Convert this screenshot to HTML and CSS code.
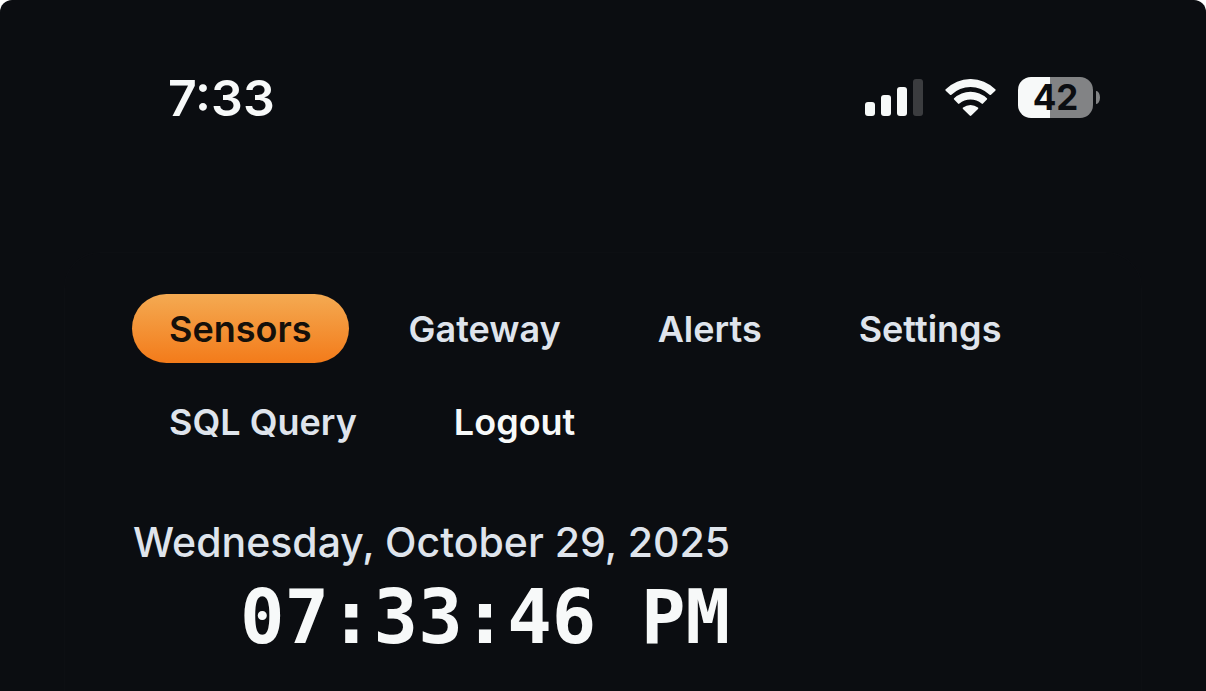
FILE: index.html
```html
<!DOCTYPE html>
<html lang="en">
<head>
<meta charset="utf-8">
<meta name="viewport" content="width=device-width, initial-scale=1">
<title>Sensors</title>
<link rel="stylesheet" href="styles.css">
</head>
<body>
<div class="screen">
  <header class="status">
    <time class="status-time">7:33</time>
    <div class="status-icons">
      <svg class="signal" width="58" height="37" viewBox="0 0 58 37" role="img" aria-label="Signal">
        <rect x="0" y="23" width="10" height="14" rx="3"/>
        <rect x="16" y="16" width="10" height="21" rx="3"/>
        <rect x="32" y="8" width="10" height="29" rx="3"/>
        <rect class="dim" x="48" y="0" width="10" height="37" rx="3"/>
      </svg>
      <svg class="wifi" width="51" height="37" viewBox="0 0 51 37" role="img" aria-label="Wi-Fi">
        <path d="M.7 10.300A35 35 0 0 1 50.300 10.300Q51 11 50.300 11.700L46 15.800Q45.300 16.400 44.600 15.800A27.500 27.500 0 0 0 6.400 15.800Q5.700 16.400 5 15.800L.7 11.700Q0 11 .7 10.300z"/>
        <path d="M9.100 19.200A24 24 0 0 1 41.900 19.200Q42.600 19.900 41.900 20.600L38 24.600Q37.300 25.200 36.600 24.600A17 17 0 0 0 14.400 24.600Q13.700 25.200 13 24.600L9.100 20.600Q8.400 19.900 9.100 19.200z"/>
        <path d="M18.100 28.500A12 12 0 0 1 32.900 28.500Q33.700 29.100 33 29.900L26.300 36.500Q25.500 37.300 24.700 36.500L18 29.900Q17.300 29.100 18.100 28.500z"/>
      </svg>
      <div class="battery"><span class="cell">42</span><span class="cap"></span></div>
    </div>
  </header>
  <main class="panel">
    <nav class="tabs">
      <a class="tab active" href="#sensors">Sensors</a>
      <a class="tab" href="#gateway">Gateway</a>
      <a class="tab" href="#alerts">Alerts</a>
      <a class="tab" href="#settings">Settings</a>
      <a class="tab" href="#query">SQL Query</a>
      <a class="tab logout" href="#logout">Logout</a>
    </nav>
    <div class="datetime">
      <div class="date">Wednesday, October 29, 2025</div>
      <div class="clock">07:33:46 PM</div>
    </div>
  </main>
</div>
</body>
</html>
```
FILE: styles.css
```css
* { box-sizing: border-box; }
body { margin: 0; background: #fff; font-family: Inter, "Liberation Sans", sans-serif; }
.screen { min-height: 100vh; padding: 64px 64px 0; background: #0b0d11; border-radius: 12px 12px 0 0; display: flex; flex-direction: column; }
.status { display: flex; align-items: center; justify-content: space-between; height: 68px; padding: 0 42px 0 104px; color: #f7f9f9; }
.status-time { font-size: 50px; font-weight: 600; line-height: 68px; }
.status-icons { display: flex; align-items: center; gap: 22px; padding-bottom: 1px; }
.signal, .wifi { fill: #f7f9f9; }
.dim { fill: #3b3c3f; }
.battery { display: flex; align-items: center; gap: 3px; }
.cell { width: 75px; height: 41px; border-radius: 13px; background: linear-gradient(90deg, #f7f9f9 43%, #828385 43%); color: #0b0d11; font-size: 35px; line-height: 41px; font-weight: 700; text-align: center; }
.cap { width: 4px; height: 13px; border-radius: 0 4px 4px 0 / 0 7px 7px 0; background: #828385; }
.panel { flex: 1; margin-top: 120px; padding: 41px 67px 0; border: 1px solid #0d0f13; border-bottom: 0; border-radius: 36px 36px 0 0; }
.tabs { display: flex; flex-wrap: wrap; gap: 24px 23px; }
.tab { padding: 2px 37px 0; line-height: 67px; font-size: 36px; font-weight: 600; color: #dfe4ec; text-decoration: none; border-radius: 35px; white-space: nowrap; }
.active { color: #15100a; background: linear-gradient(#f4aa52, #f37b1a); }
.logout { color: #f7f9f9; }
.datetime { width: max-content; margin-top: 60px; padding-left: 1px; text-align: right; }
.date { font-size: 41px; font-weight: 500; line-height: 52px; color: #dfe4ec; }
.clock { font-family: "DejaVu Sans Mono", monospace; font-size: 74px; font-weight: 700; line-height: 98px; color: #f7f9f9; }
```
